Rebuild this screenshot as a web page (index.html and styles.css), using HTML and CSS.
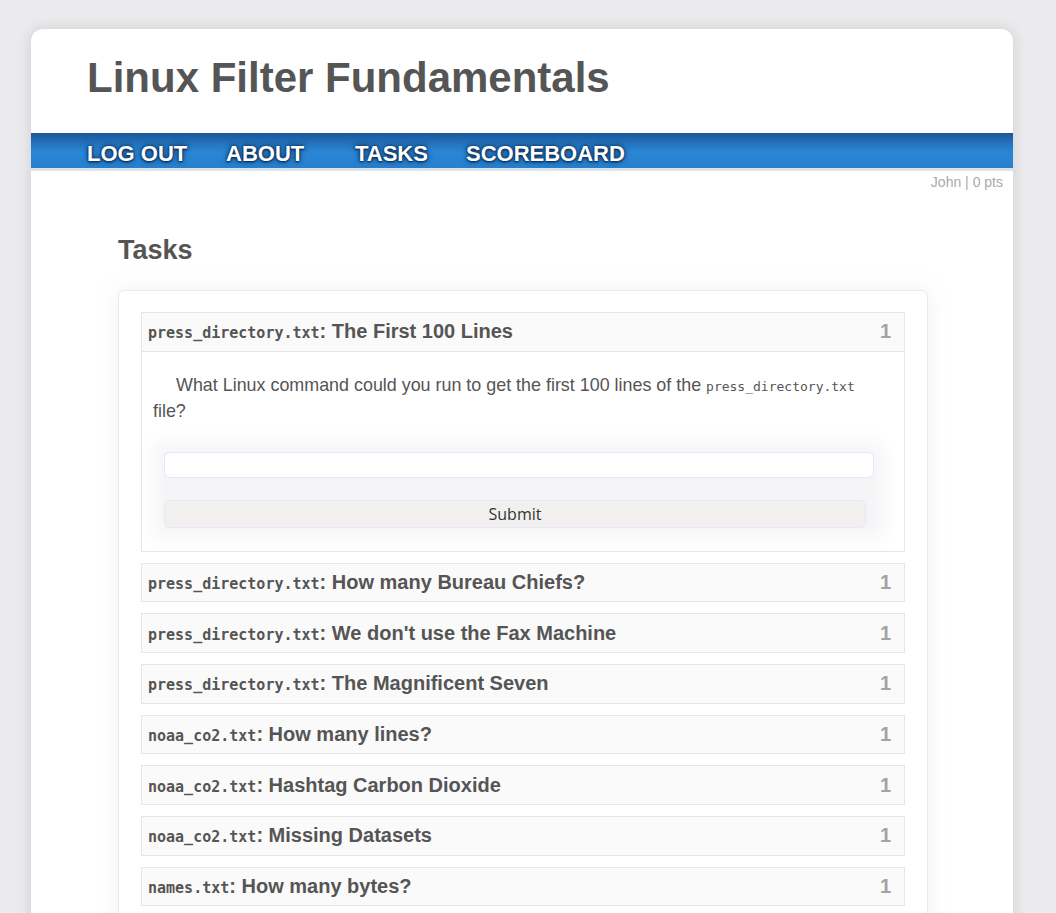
FILE: index.html
```html
<!DOCTYPE html>
<html>
<head>
<meta charset="utf-8">
<link rel="stylesheet" href="styles.css">
</head>
<body>
<div class="page">
  <header class="masthead">
    <h1 class="site-title">Linux Filter Fundamentals</h1>
  </header>
  <nav class="navbar">
    <a class="nav-link nav-logout">LOG OUT</a>
    <a class="nav-link nav-about">ABOUT</a>
    <a class="nav-link nav-tasks">TASKS</a>
    <a class="nav-link nav-score">SCOREBOARD</a>
  </nav>
  <div class="userline">John | 0 pts</div>
  <main class="content">
    <h2 class="section-title">Tasks</h2>
    <div class="panel">
      <div class="task open">
        <div class="task-head">
          <span class="task-name"><code class="file">press_directory.txt</code>: The First 100 Lines</span>
          <span class="pts">1</span>
        </div>
        <div class="task-body">
          <p class="question">What Linux command could you run to get the first 100 lines of the <code class="inline">press_directory.txt</code> file?</p>
          <form class="answer">
            <input class="answer-input" type="text">
            <button class="submit" type="button">Submit</button>
          </form>
        </div>
      </div>
      <div class="task">
        <div class="task-head"><span class="task-name"><code class="file">press_directory.txt</code>: How many Bureau Chiefs?</span><span class="pts">1</span></div>
      </div>
      <div class="task">
        <div class="task-head"><span class="task-name"><code class="file">press_directory.txt</code>: We don't use the Fax Machine</span><span class="pts">1</span></div>
      </div>
      <div class="task">
        <div class="task-head"><span class="task-name"><code class="file">press_directory.txt</code>: The Magnificent Seven</span><span class="pts">1</span></div>
      </div>
      <div class="task">
        <div class="task-head"><span class="task-name"><code class="file">noaa_co2.txt</code>: How many lines?</span><span class="pts">1</span></div>
      </div>
      <div class="task">
        <div class="task-head"><span class="task-name"><code class="file">noaa_co2.txt</code>: Hashtag Carbon Dioxide</span><span class="pts">1</span></div>
      </div>
      <div class="task">
        <div class="task-head"><span class="task-name"><code class="file">noaa_co2.txt</code>: Missing Datasets</span><span class="pts">1</span></div>
      </div>
      <div class="task">
        <div class="task-head"><span class="task-name"><code class="file">names.txt</code>: How many bytes?</span><span class="pts">1</span></div>
      </div>
    </div>
  </main>
</div>
</body>
</html>
```
FILE: styles.css
```css
html, body {
  margin: 0;
  padding: 0;
}
body {
  background: #ebebed;
  font-family: "Liberation Sans", Arial, sans-serif;
  color: #555;
  height: 913px;
  overflow: hidden;
}
.page {
  margin: 29px 43px 0 31px;
  background: #fff;
  border-radius: 12px 12px 0 0;
  box-shadow: 0 0 14px rgba(0,0,0,0.13);
  min-height: 1000px;
}
.masthead {
  height: 104px;
  padding-left: 56px;
  box-sizing: border-box;
  padding-top: 24px;
}
.site-title {
  margin: 0;
  font-size: 42px;
  font-weight: bold;
  color: #555;
  line-height: 50px;
}
.navbar {
  height: 35px;
  border-bottom: 3px solid #dde3ea;
  background: linear-gradient(to bottom, #1d5596 0%, #2478c4 35%, #2a86d6 55%, #2680cd 100%);
  display: flex;
  align-items: center;
  padding-left: 56px;
}
.nav-link {
  color: #fff;
  font-weight: bold;
  font-size: 22px;
  text-shadow: 0 0 3px #0b2a50, 0 0 6px #0d3466, 0 1px 2px #0b2a50;
  text-decoration: none;
  line-height: 35px;
  padding-top: 5px;
}
.nav-logout { width: 139px; }
.nav-about { width: 129px; }
.nav-tasks { width: 111px; }
.userline {
  text-align: right;
  padding-right: 10px;
  font-size: 14px;
  color: #aaa;
  line-height: 22px;
}
.content {
  padding: 42px 85px 0 87px;
}
.section-title {
  margin: 0 0 25px 0;
  font-size: 27px;
  font-weight: bold;
  color: #555;
  line-height: 30px;
}
.panel {
  background: #fff;
  border: 1px solid #e8e8f6;
  border-radius: 6px;
  box-shadow: 0 0 20px rgba(200,200,215,0.25);
  padding: 21px 22px 40px 22px;
  display: flex;
  flex-direction: column;
  gap: 11px;
}
.task {
  border: 1px solid #e6e6e6;
  background: #fafafa;
}
.task-head {
  height: 37.67px;
  display: flex;
  align-items: center;
  justify-content: space-between;
  padding: 0 13px 0 6px;
}
.task.open .task-head {
  border-bottom: 1px solid #e6e6e6;
}
.task-name {
  font-size: 20px;
  font-weight: bold;
  color: #555;
}
.file {
  font-family: "DejaVu Sans Mono", monospace;
  font-size: 15px;
  font-weight: bold;
}
.pts {
  font-size: 20px;
  font-weight: bold;
  color: #a3a3a3;
}
.task-body {
  background: #fff;
  padding: 21px 12px 23px 11px;
}
.question {
  margin: 0;
  font-size: 17.9px;
  line-height: 24px;
  text-indent: 23px;
  color: #555;
  padding-right: 12px;
}
.inline {
  font-family: "DejaVu Sans Mono", monospace;
  font-size: 13px;
}
.answer {
  margin: 29px 18px 0 11px;
  display: flex;
  flex-direction: column;
  gap: 22px;
  background: #f5f5f7;
  box-shadow: 0 0 18px 10px #f5f5f7;
}
.answer-input {
  height: 26px;
  box-sizing: border-box;
  border: 1px solid #e6e6fa;
  border-radius: 6px;
  background: #fff;
  margin: 0;
  width: 100%;
}
.submit {
  height: 28px;
  box-sizing: border-box;
  border: 1px solid #e6e6fa;
  border-radius: 6px;
  background: #f1f0ef;
  font-family: "Open Sans", "DejaVu Sans", sans-serif;
  font-size: 16px;
  color: #333;
  margin-right: 8px;
  padding: 0;
}
```
